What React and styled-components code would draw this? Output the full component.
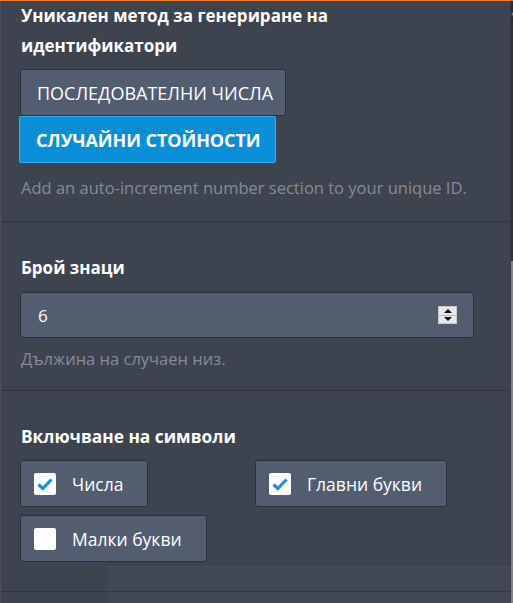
import React from "react";
import styled, { createGlobalStyle } from "styled-components";

const GlobalStyle = createGlobalStyle`
  html, body {
    margin: 0;
    padding: 0;
    background: #3e4350;
    overflow: hidden;
  }
  * {
    box-sizing: border-box;
  }
`;

const Frame = styled.div`
  position: relative;
  display: flex;
  width: 513px;
  height: 603px;
  border-top: 1px solid #f27b21;
  font-family: "Open Sans", "Liberation Sans", sans-serif;
  color: #ffffff;
  overflow: hidden;
`;

const Panel = styled.div`
  flex: 1;
  background: #3e4350;
  border-left: 1px solid #4a4f5a;
  border-right: 1px solid #373b45;
`;

const Section = styled.div`
  padding: ${(p) => p.$pad || "0 20px"};
  border-bottom: 1px solid #31353f;
`;

const Title = styled.div`
  margin: 0;
  font-size: ${(p) => p.$size || "17px"};
  font-weight: 700;
  line-height: ${(p) => p.$lh || "24px"};
`;

const ButtonGroup = styled.div`
  display: flex;
  flex-direction: column;
  align-items: flex-start;
  margin-top: 8px;
`;

const ModeButton = styled.button`
  height: 47px;
  margin-left: ${(p) => (p.$active ? "-2px" : "-1px")};
  padding: 0 ${(p) => (p.$active ? "15px" : "12px")} 0 16px;
  border: 1px solid ${(p) => (p.$active ? "#3aaef2" : "#2c3039")};
  border-radius: 2px;
  background: ${(p) => (p.$active ? "#0a8ed8" : "#535d70")};
  color: #ffffff;
  font-family: inherit;
  font-size: 18px;
  font-weight: ${(p) => (p.$active ? 700 : 400)};
  letter-spacing: ${(p) => (p.$active ? "-0.1px" : "0")};
  white-space: nowrap;
  cursor: pointer;
`;

const Hint = styled.div`
  margin-top: ${(p) => p.$mt || "13px"};
  font-size: 16.5px;
  line-height: 24px;
  color: #858b96;
  white-space: nowrap;
`;

const NumberBox = styled.div`
  display: flex;
  align-items: center;
  justify-content: space-between;
  width: 454px;
  height: 46px;
  margin: 12px 0 0 -1px;
  padding: 0 16px 0 17px;
  background: #535d70;
  border: 1px solid #2c3039;
  border-radius: 3px;
  font-size: 17px;
`;

const Spinner = styled.div`
  display: flex;
  flex-direction: column;
  width: 19px;
  height: 18px;
  background: #e9e9e9;
  border: 1px solid #c9c9c9;
`;

const SpinHalf = styled.div`
  flex: 1;
  display: flex;
  align-items: center;
  justify-content: center;
  border-top: ${(p) => (p.$down ? "1px solid #b5b5b5" : "none")};

  &::after {
    content: "";
    border-left: 4px solid transparent;
    border-right: 4px solid transparent;
    ${(p) =>
      p.$down
        ? "border-top: 4px solid #111;"
        : "border-bottom: 4px solid #111;"}
  }
`;

const Options = styled.div`
  display: grid;
  grid-template-columns: 235px 235px;
  row-gap: 8px;
  margin: 11px 0 0 -1px;
  justify-items: start;
`;

const Option = styled.label`
  display: flex;
  align-items: center;
  gap: 16px;
  height: 47px;
  padding: 0 24px 0 13px;
  background: #535d70;
  border: 1px solid #2c3039;
  border-radius: 3px;
  font-size: 17.5px;
  white-space: nowrap;
  cursor: pointer;
`;

const Box = styled.span`
  display: flex;
  align-items: center;
  justify-content: center;
  width: 22px;
  height: 22px;
  background: #ffffff;
  border-radius: 2px;
`;

const Scrollbar = styled.div`
  display: flex;
  flex-direction: column;
  width: 20px;
  background: #2e323b;
`;

const ScrollArrow = styled.div`
  display: flex;
  align-items: center;
  justify-content: center;
  height: 21px;
  background: #282c34;
`;

const Thumb = styled.div`
  margin-top: 239px;
  flex: 1;
  background: #818489;
`;

const Backdrop = styled.div`
  position: absolute;
  left: 107px;
  top: 565px;
  width: 420px;
  height: 60px;
  background: rgba(120, 126, 138, 0.08);
  border-top: 1px solid rgba(150, 155, 165, 0.1);
  pointer-events: none;
`;

const Check = () => (
  <svg width="16" height="14" viewBox="0 0 16 14">
    <path
      d="M1.5 7.5 L5.8 11.5 L14.5 2.5"
      fill="none"
      stroke="#1a8fe0"
      strokeWidth="3.2"
      strokeLinejoin="miter"
    />
  </svg>
);

const options = [
  { label: "Числа", checked: true },
  { label: "Главни букви", checked: true },
  { label: "Малки букви", checked: false },
];

export default function App() {
  return (
    <>
      <GlobalStyle />
      <Frame>
        <Panel>
          <Section $pad="0 20px 21px">
            <Title $lh="30px">
              Уникален метод за генериране на
              <br />
              идентификатори
            </Title>
            <ButtonGroup>
              <ModeButton>ПОСЛЕДОВАТЕЛНИ ЧИСЛА</ModeButton>
              <ModeButton $active>СЛУЧАЙНИ СТОЙНОСТИ</ModeButton>
            </ButtonGroup>
            <Hint>Add an auto-increment number section to your unique ID.</Hint>
          </Section>

          <Section $pad="34px 20px 19px">
            <Title>Брой знаци</Title>
            <NumberBox>
              <span>6</span>
              <Spinner>
                <SpinHalf />
                <SpinHalf $down />
              </Spinner>
            </NumberBox>
            <Hint $mt="9px">Дължина на случаен низ.</Hint>
          </Section>

          <Section $pad="34px 20px 29px">
            <Title $size="17.3px">Включване на символи</Title>
            <Options>
              {options.map((o) => (
                <Option key={o.label}>
                  <Box>{o.checked && <Check />}</Box>
                  {o.label}
                </Option>
              ))}
            </Options>
          </Section>
        </Panel>
        <Scrollbar>
          <ScrollArrow>
            <svg width="12" height="8" viewBox="0 0 12 8">
              <path d="M1 7 L6 2 L11 7" fill="none" stroke="#7b7f87" strokeWidth="2.4" />
            </svg>
          </ScrollArrow>
          <Thumb />
        </Scrollbar>
        <Backdrop />
      </Frame>
    </>
  );
}
